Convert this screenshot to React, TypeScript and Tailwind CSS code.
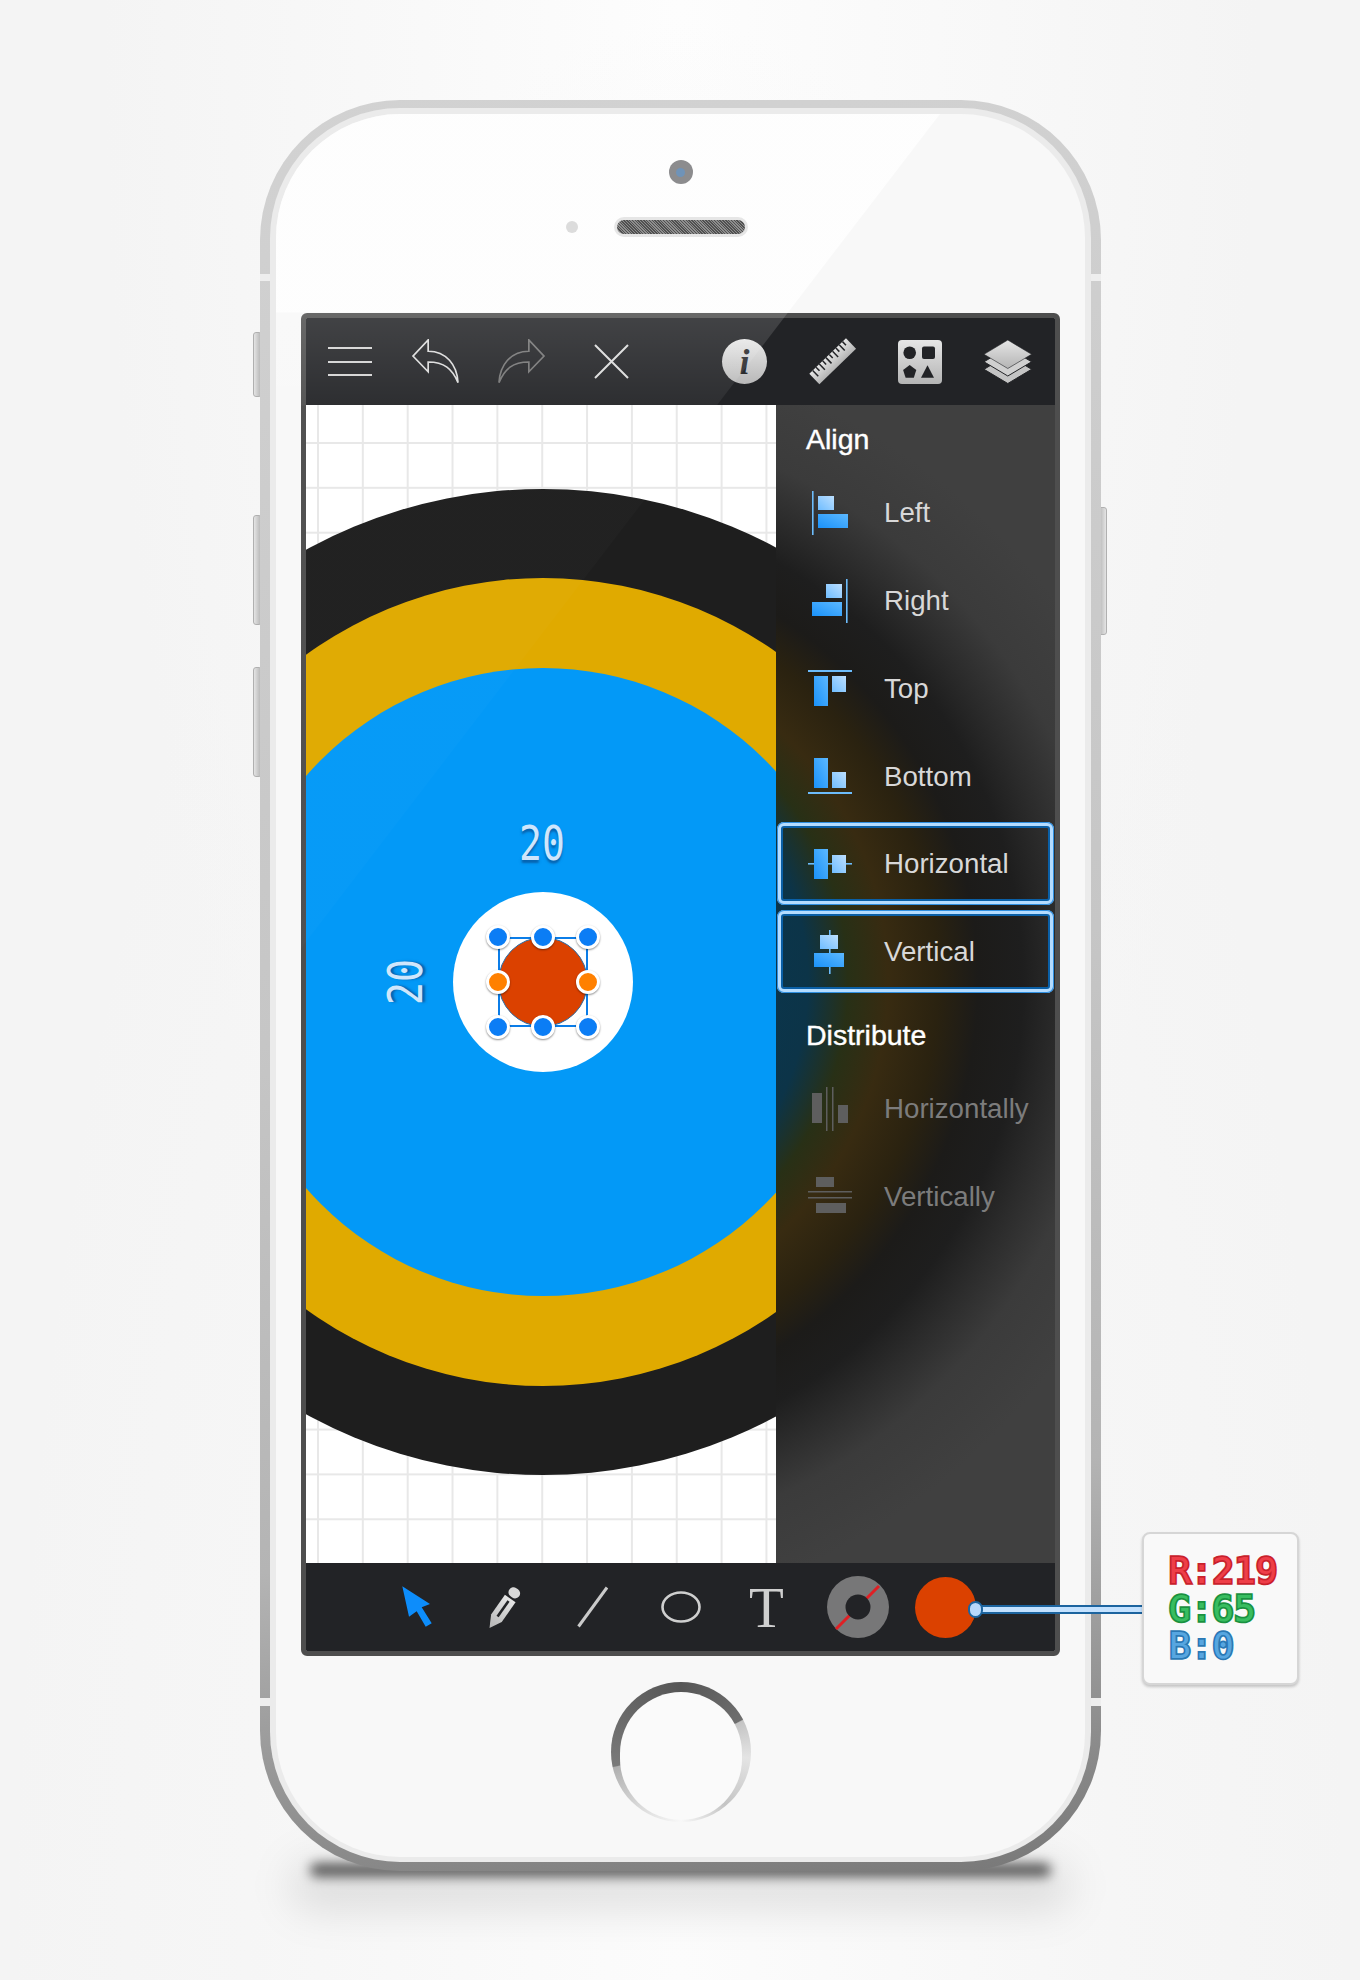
import type { ReactNode } from "react";

const ROWS_ALIGN = ["Left", "Right", "Top", "Bottom"];

function Blue({ x, y, w, h, light }: { x: number; y: number; w: number; h: number; light?: boolean }) {
  return <rect x={x} y={y} width={w} height={h} fill={light ? "url(#blueLight)" : "url(#blueStrong)"} />;
}

function Rule({ x, y, w, h, color = "#6cbcfb" }: { x: number; y: number; w: number; h: number; color?: string }) {
  return <rect x={x} y={y} width={w} height={h} fill={color} />;
}

const ALIGN_ICONS: Record<string, ReactNode> = {
  Left: (
    <>
      <Rule x={4} y={0} w={1.6} h={44} />
      <Blue x={10} y={5} w={16} h={14} light />
      <Blue x={10} y={23} w={30} h={14} />
    </>
  ),
  Right: (
    <>
      <Rule x={38} y={0} w={1.6} h={44} />
      <Blue x={18} y={5} w={16} h={14} light />
      <Blue x={4} y={23} w={30} h={14} />
    </>
  ),
  Top: (
    <>
      <Rule x={0} y={3} w={44} h={2} />
      <Blue x={6} y={9} w={14} h={30} />
      <Blue x={24} y={9} w={14} h={16} light />
    </>
  ),
  Bottom: (
    <>
      <Rule x={0} y={37} w={44} h={2} />
      <Blue x={6} y={3} w={14} h={30} />
      <Blue x={24} y={17} w={14} h={16} light />
    </>
  ),
  Horizontal: (
    <>
      <Rule x={0} y={21} w={44} h={1.6} />
      <Blue x={6} y={7} w={14} h={30} />
      <Blue x={24} y={13} w={14} h={18} light />
    </>
  ),
  Vertical: (
    <>
      <Rule x={21} y={0} w={1.6} h={44} />
      <Blue x={12} y={5} w={18} h={14} light />
      <Blue x={6} y={23} w={30} h={14} />
    </>
  ),
  Horizontally: (
    <>
      <Rule x={18} y={0} w={1.5} h={44} color="#5e5e5e" />
      <Rule x={24} y={0} w={1.5} h={44} color="#5e5e5e" />
      <Rule x={4} y={6} w={10} h={30} color="#5e5e5e" />
      <Rule x={30} y={18} w={10} h={18} color="#5e5e5e" />
    </>
  ),
  Vertically: (
    <>
      <Rule x={0} y={16} w={44} h={1.5} color="#5e5e5e" />
      <Rule x={0} y={22} w={44} h={1.5} color="#5e5e5e" />
      <Rule x={8} y={2} w={18} h={10} color="#5e5e5e" />
      <Rule x={8} y={28} w={30} h={10} color="#5e5e5e" />
    </>
  ),
};

function PanelRow({ label, disabled, selected }: { label: string; disabled?: boolean; selected?: boolean }) {
  const body = (
    <>
      <svg width="44" height="44" viewBox="0 0 44 44" className="shrink-0">
        {ALIGN_ICONS[label]}
      </svg>
      <span className={`ml-[32px] text-[27.7px] leading-8 ${disabled ? "text-[#7c7c7c]" : "text-[#d8d8d8]"}`}>{label}</span>
    </>
  );
  if (selected) {
    return (
      <div className="h-[88px]">
        <div className="mx-px mt-px flex h-[83px] items-center rounded-[7px] pl-[31px] shadow-[inset_0_0_0_1px_#2f8fe0,inset_0_0_0_4px_#b4dcff,inset_0_0_0_6px_#0a5fa6]">
          {body}
        </div>
      </div>
    );
  }
  return <div className="flex h-[88px] items-center pl-[32px]">{body}</div>;
}

const HANDLES = [
  "left-[-14px] top-[-14px] bg-[#0b7df5]",
  "left-[31px] top-[-14px] bg-[#0b7df5]",
  "left-[76px] top-[-14px] bg-[#0b7df5]",
  "left-[-14px] top-[31px] bg-[#ff8000]",
  "left-[76px] top-[31px] bg-[#ff8000]",
  "left-[-14px] top-[76px] bg-[#0b7df5]",
  "left-[31px] top-[76px] bg-[#0b7df5]",
  "left-[76px] top-[76px] bg-[#0b7df5]",
];

function Canvas() {
  return (
    <div className="relative h-full w-[470px] overflow-hidden bg-white bg-[linear-gradient(to_right,#e8e8e8_2px,transparent_2px),linear-gradient(to_bottom,#e8e8e8_2px,transparent_2px)] bg-[size:44.85px_44.85px] bg-[position:11px_37px]">
      <div className="absolute left-[-256px] top-[84px] flex h-[986px] w-[986px] items-center justify-center rounded-full bg-[#1e1e1e]">
        <div className="flex h-[808px] w-[808px] items-center justify-center rounded-full bg-[#e0aa00]">
          <div className="relative flex h-[628px] w-[628px] items-center justify-center rounded-full bg-[#0399f7]">
            <span className="absolute left-[313px] top-[176px] -translate-x-1/2 -translate-y-1/2 scale-y-125 font-['DejaVu_Sans_Mono',monospace] text-[38px] leading-none text-[#cfe6fc] [text-shadow:0_2px_2px_rgba(8,80,150,0.75)]">
              20
            </span>
            <span className="absolute left-[177px] top-[314px] -translate-x-1/2 -translate-y-1/2 -rotate-90 scale-y-125 font-['DejaVu_Sans_Mono',monospace] text-[38px] leading-none text-[#cfe6fc] [text-shadow:0_2px_2px_rgba(8,80,150,0.75)]">
              20
            </span>
            <div className="flex h-[180px] w-[180px] items-center justify-center rounded-full bg-white">
              <div className="relative flex h-[90px] w-[90px] items-center justify-center border-2 border-[#0b7de8]">
                <div className="h-[90px] w-[90px] shrink-0 rounded-full border border-[#2a6ea8] bg-[#db4100]" />
                {HANDLES.map((h) => (
                  <span
                    key={h}
                    className={`absolute box-content h-[18px] w-[18px] rounded-full border-[3px] border-white shadow-[0_1px_2px_rgba(0,0,0,0.45)] ${h}`}
                  />
                ))}
              </div>
            </div>
          </div>
        </div>
      </div>
    </div>
  );
}

function Panel() {
  return (
    <div className="flex h-full flex-1 flex-col font-['Liberation_Sans',Arial,sans-serif] bg-[radial-gradient(circle_at_-233px_577px,#053a5c_0px,#0c3448_265px,#283016_305px,#382b11_345px,#2a2210_395px,#1c1b19_435px,#1e1e1e_480px,#2c2c2c_520px,#3b3b3b_565px,#404040_640px)]">
      <div className="flex h-[64px] items-end pb-[14px] pl-[30px] text-[28.5px] leading-8 text-white [-webkit-text-stroke:0.4px_#fff]">
        Align
      </div>
      {ROWS_ALIGN.map((r) => (
        <PanelRow key={r} label={r} />
      ))}
      <PanelRow label="Horizontal" selected />
      <PanelRow label="Vertical" selected />
      <div className="flex h-[68px] items-end pb-[14px] pl-[30px] text-[28.5px] leading-8 text-white [-webkit-text-stroke:0.4px_#fff]">
        Distribute
      </div>
      <PanelRow label="Horizontally" disabled />
      <PanelRow label="Vertically" disabled />
    </div>
  );
}

function TopBar() {
  const undo = "M2 17 L17.5 0.5 V12 C36 12 47 26 48 44 C42 30 34 23 17.5 23 V33 Z";
  return (
    <div className="flex h-[87px] items-center bg-[#222326] pl-[22px]">
      <div className="flex h-[29px] w-[44px] flex-col justify-between">
        <div className="h-[2px] bg-[#d4d4d4]" />
        <div className="h-[2px] bg-[#d4d4d4]" />
        <div className="h-[2px] bg-[#d4d4d4]" />
      </div>
      <svg width="48" height="45" viewBox="0 0 49 45" className="ml-[39px]">
        <path d={undo} fill="none" stroke="#dcdcdc" strokeWidth="1.7" strokeLinejoin="miter" />
      </svg>
      <svg width="48" height="45" viewBox="0 0 49 45" className="ml-[39px] -scale-x-100">
        <path d={undo} fill="none" stroke="#767676" strokeWidth="1.7" />
      </svg>
      <svg width="35" height="35" viewBox="0 0 35 35" className="ml-[48px]">
        <path d="M1 1 L34 34 M34 1 L1 34" stroke="#dcdcdc" strokeWidth="2" />
      </svg>
      <div className="ml-[93px] flex h-[45px] w-[45px] items-center justify-center rounded-full bg-[linear-gradient(to_bottom,#e8e8e8,#b8b8b8)] font-['Liberation_Serif',serif] text-[36px] font-bold italic leading-none text-[#2b2b2d]">
        i
      </div>
      <svg width="48" height="47" viewBox="0 0 48 47" className="ml-[42px]">
        <g transform="translate(0.3 35.7) rotate(-44)">
          <rect width="51" height="14.5" fill="url(#metal)" />
          {Array.from({ length: 10 }).map((_, i) => (
            <rect key={i} x={4 + i * 4.6} y={0} width={1.5} height={i % 2 ? 5 : 8} fill="#222326" />
          ))}
        </g>
      </svg>
      <svg width="44" height="44" viewBox="0 0 44 44" className="ml-[41px]">
        <rect width="44" height="44" rx="4" fill="url(#metal)" />
        <circle cx="11.7" cy="12.7" r="6.3" fill="#222326" />
        <rect x="24" y="6.5" width="13" height="12.5" rx="2" fill="#222326" />
        <path d="M11.7 25 L18.3 30 L15.8 37.8 H7.6 L5.1 30 Z" fill="#222326" />
        <path d="M29.5 25.3 L36 37.8 H23 Z" fill="#222326" />
      </svg>
      <svg width="48" height="44" viewBox="0 0 48 44" className="ml-[42px]">
        <path d="M23.8 15 L47.6 29.3 L23.8 43.5 L0 29.3 Z" fill="#c4c4c4" stroke="#222326" strokeWidth="1" />
        <path d="M23.8 7.5 L47.6 21.8 L23.8 36 L0 21.8 Z" fill="#d0d0d0" stroke="#222326" strokeWidth="1" />
        <path d="M23.8 0 L47.6 14.3 L23.8 28.5 L0 14.3 Z" fill="url(#metal)" stroke="#222326" strokeWidth="0.6" />
      </svg>
    </div>
  );
}

function BottomBar() {
  return (
    <div className="flex h-[88px] items-center bg-[#222326] pl-[95px]">
      <svg width="32" height="42" viewBox="0 0 32 42" className="shrink-0">
        <path d="M1.3 0.3 L29 18 L20.7 21.3 L30.7 37.3 L24.7 40.7 L15.7 25.3 L8 30.7 Z" fill="#0d8dfb" />
      </svg>
      <svg width="34" height="43" viewBox="0 0 34 43" className="ml-[56px] shrink-0">
        <g transform="translate(0.5 42) rotate(35.2)">
          <path d="M0 0 L-6.5 -12 V-36 H6.5 V-12 Z" fill="url(#metal)" />
          <rect x="-1.3" y="-33" width="2.6" height="19" fill="#222326" />
          <rect x="-6" y="-48" width="12" height="10" rx="5" fill="#d8d8d8" />
        </g>
      </svg>
      <svg width="32" height="42" viewBox="0 0 32 42" className="ml-[54px] shrink-0">
        <path d="M1.5 40.5 L30 1.5" stroke="#cacaca" strokeWidth="3" strokeLinecap="butt" />
      </svg>
      <svg width="40" height="32" viewBox="0 0 40 32" className="ml-[52px] shrink-0">
        <ellipse cx="20" cy="16" rx="18.5" ry="14.5" fill="none" stroke="#cfcfcf" strokeWidth="2.6" />
      </svg>
      <span className="ml-[48px] w-[44px] font-['Liberation_Serif',serif] text-[57px] leading-none text-[#cfcfcf]">T</span>
      <svg width="62" height="62" viewBox="0 0 62 62" className="ml-[34px] shrink-0">
        <circle cx="31" cy="31" r="31" fill="#777778" />
        <path d="M52 10 L9 53" stroke="#e01f24" strokeWidth="3" />
        <circle cx="31" cy="31" r="12.5" fill="#222326" />
      </svg>
      <div className="ml-[26px] h-[61px] w-[61px] shrink-0 rounded-full bg-[#db4100]" />
    </div>
  );
}

function Phone() {
  return (
    <div className="relative isolate h-[1771px] w-[841px]">
      {/* floor shadow */}
      <div className="absolute bottom-[-6px] left-[50px] right-[50px] -z-10 h-[14px] rounded-full bg-black/60 blur-[6px]" />
      <div className="absolute bottom-[-40px] left-[30px] right-[30px] -z-10 h-[50px] rounded-full bg-black/10 blur-[20px]" />
      {/* side buttons */}
      <div className="absolute left-[-7px] top-[232px] -z-10 h-[65px] w-[9px] rounded-[3px] border border-[#b0b0b0] bg-[linear-gradient(to_right,#e4e4e4,#b4b4b4)]" />
      <div className="absolute left-[-7px] top-[415px] -z-10 h-[110px] w-[9px] rounded-[3px] border border-[#b0b0b0] bg-[linear-gradient(to_right,#e4e4e4,#b4b4b4)]" />
      <div className="absolute left-[-7px] top-[567px] -z-10 h-[110px] w-[9px] rounded-[3px] border border-[#b0b0b0] bg-[linear-gradient(to_right,#e4e4e4,#b4b4b4)]" />
      <div className="absolute left-[838px] top-[407px] -z-10 h-[128px] w-[9px] rounded-[3px] border border-[#b0b0b0] bg-[linear-gradient(to_left,#e4e4e4,#b4b4b4)]" />

      <div className="h-full rounded-[140px] bg-[linear-gradient(172deg,#d2d2d2,#c6c6c6_50%,#b4b4b4_78%,#8c8c8c_93%,#777777)] px-[10px] pb-[9px] pt-[8px]">
        <div className="h-full rounded-[130px] bg-[#ebebeb] px-[6px] pb-[5px] pt-[6px]">
          <div className="relative flex h-full flex-col items-center overflow-hidden rounded-[124px] bg-[#f8f8f8]">
            <div className="relative z-10 mt-[46px] flex h-[24px] w-[24px] items-center justify-center rounded-full bg-[#8c8c8e]">
              <div className="h-[9px] w-[9px] rounded-full bg-[#6f93b8]" />
            </div>
            <div className="relative z-10 mt-[33px] h-[20px] w-[134px] rounded-full bg-[#e6e6e6] p-[3px]">
              <div className="h-full rounded-full bg-[repeating-linear-gradient(45deg,#505050_0,#505050_1px,#8e8e8e_1px,#8e8e8e_2px)]" />
              <div className="absolute left-[-48px] top-[4px] h-[12px] w-[12px] rounded-full bg-[#dcdcdc]" />
            </div>

            <div className="mt-[76px] h-[1343px] w-[759px] shrink-0 overflow-hidden rounded-[6px] border-[5px] border-[#4e4e4e]">
              <TopBar />
              <div className="flex h-[1158px]">
                <Canvas />
                <Panel />
              </div>
              <BottomBar />
            </div>

            <div className="mt-[26px] flex h-[140px] w-[140px] justify-center rounded-full bg-[conic-gradient(from_0deg,#565656_0deg,#6e6e6e_62deg,#c4c4c4_63deg,#e4e4e4_95deg,#c4c4c4_140deg,#f8f8f8_180deg,#dcdcdc_215deg,#b0b0b0_257deg,#7a7a7a_258deg,#666666_310deg,#565656_360deg)] pt-[10px]">
              <div className="h-[128px] w-[122px] rounded-full bg-[#fafafa]" />
            </div>

            {/* glass reflection */}
            <div className="pointer-events-none absolute inset-0 bg-[linear-gradient(to_bottom,rgba(255,255,255,0.8)_0px,rgba(255,255,255,0.8)_198px,rgba(255,255,255,0.15)_199px,rgba(255,255,255,0.05)_291px,rgba(255,255,255,0.015)_292px,rgba(255,255,255,0.015)_867px)] [clip-path:polygon(0_0,664px_0,0_867px)]" />
          </div>
        </div>
      </div>
      {/* band seams */}
      <div className="absolute left-0 top-[174px] h-[7px] w-[10px] bg-[#eeeeee]" />
      <div className="absolute right-0 top-[174px] h-[7px] w-[10px] bg-[#eeeeee]" />
      <div className="absolute left-0 top-[1598px] h-[8px] w-[10px] bg-[#eeeeee]" />
      <div className="absolute right-0 top-[1598px] h-[8px] w-[10px] bg-[#eeeeee]" />
    </div>
  );
}

const CHANNELS = [
  { text: "R:219", cls: "text-[#ee3e48] [-webkit-text-stroke:3.5px_#c8212c]" },
  { text: "G:65", cls: "text-[#38bd60] [-webkit-text-stroke:3.5px_#1a9140]" },
  { text: "B:0", cls: "text-[#57a6e0] [-webkit-text-stroke:3.5px_#2a78b4]" },
];

export default function App() {
  return (
    <div className="relative h-[1980px] w-[1360px] overflow-hidden bg-[radial-gradient(ellipse_at_50%_100%,#fcfcfc_0%,#f6f6f6_45%,transparent_70%),radial-gradient(ellipse_at_50%_0%,#fdfdfd_0%,#f4f4f4_60%)] pl-[260px] pt-[100px]">
      <svg className="absolute h-0 w-0">
        <defs>
          <linearGradient id="blueStrong" x1="0" y1="1" x2="1" y2="0">
            <stop offset="0" stopColor="#1a92fa" />
            <stop offset="1" stopColor="#5cb8ff" />
          </linearGradient>
          <linearGradient id="blueLight" x1="0" y1="1" x2="1" y2="0">
            <stop offset="0" stopColor="#6fbdff" />
            <stop offset="1" stopColor="#bcdfff" />
          </linearGradient>
          <linearGradient id="metal" x1="0" y1="0" x2="0" y2="1">
            <stop offset="0" stopColor="#e6e6e6" />
            <stop offset="1" stopColor="#b4b4b4" />
          </linearGradient>
        </defs>
      </svg>

      <Phone />

      {/* colour read-out callout */}
      <div className="absolute left-[976px] top-[1605px] h-[9px] w-[166px] border-y-2 border-[#1c649f] bg-[#c4e2ff]" />
      <div className="absolute left-[968px] top-[1601px] h-[17px] w-[15px] rounded-full border-2 border-[#1c649f] bg-[#b8d8fb]" />
      <div className="absolute left-[1142px] top-[1532px] flex h-[153px] w-[157px] flex-col justify-center rounded-[8px] border-2 border-[#d6d6d6] bg-[#f9f9f9] pl-[25px] shadow-[0_2px_3px_rgba(0,0,0,0.2)]">
        {CHANNELS.map((c) => (
          <div key={c.text} className={`font-['DejaVu_Sans_Mono',monospace] text-[36px] font-normal leading-[37.5px] [paint-order:stroke_fill] ${c.cls}`}>
            {c.text}
          </div>
        ))}
      </div>
    </div>
  );
}
